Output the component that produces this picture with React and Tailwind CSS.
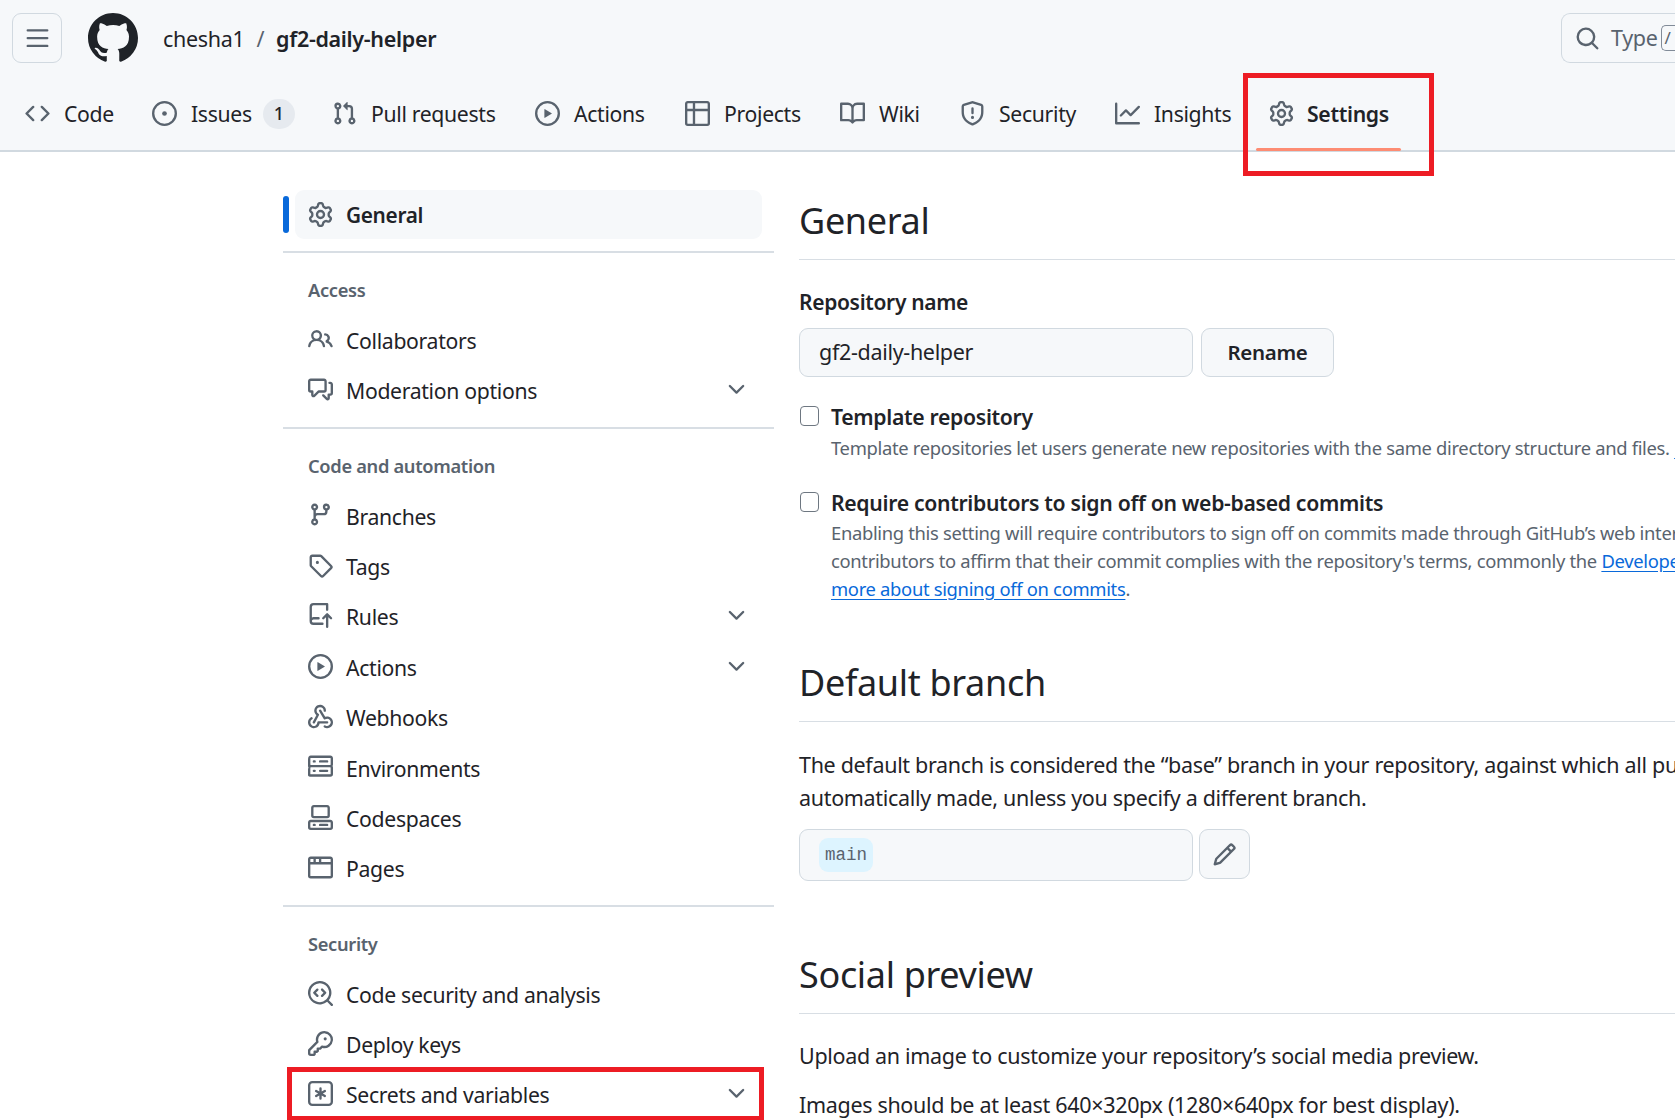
import React from "react";

function Oct({ className, d }) {
  return (
    <svg viewBox="0 0 16 16" fill="currentColor" className={className}>
      {d.map((p) => (
        <path key={p} d={p} />
      ))}
    </svg>
  );
}
const mk = (...d) => (p) => <Oct {...p} d={d} />;

const ThreeBars = mk("M1 2.75A.75.75 0 0 1 1.75 2h12.5a.75.75 0 0 1 0 1.5H1.75A.75.75 0 0 1 1 2.75Zm0 5A.75.75 0 0 1 1.75 7h12.5a.75.75 0 0 1 0 1.5H1.75A.75.75 0 0 1 1 7.75ZM1.75 12h12.5a.75.75 0 0 1 0 1.5H1.75a.75.75 0 0 1 0-1.5Z");
const MarkGithub = mk("M8 0c4.42 0 8 3.58 8 8a8.013 8.013 0 0 1-5.45 7.59c-.4.08-.55-.17-.55-.38 0-.27.01-1.13.01-2.2 0-.75-.25-1.23-.54-1.48 1.78-.2 3.65-.88 3.65-3.95 0-.88-.31-1.59-.82-2.15.08-.2.36-1.02-.08-2.12 0 0-.67-.22-2.2.82-.64-.18-1.32-.27-2-.27-.68 0-1.36.09-2 .27-1.53-1.03-2.2-.82-2.2-.82-.44 1.1-.16 1.92-.08 2.12-.51.56-.82 1.28-.82 2.15 0 3.06 1.86 3.75 3.64 3.95-.23.2-.44.55-.51 1.07-.46.21-1.61.55-2.33-.66-.15-.24-.6-.83-1.23-.82-.67.01-.27.38.01.53.34.19.73.9.82 1.13.16.45.68 1.31 2.69.94 0 .67.01 1.3.01 1.49 0 .21-.15.45-.55.38A7.995 7.995 0 0 1 0 8c0-4.42 3.58-8 8-8Z");
const Webhook = mk(
  "M5.5 4.25a2.25 2.25 0 0 1 4.5 0 .75.75 0 0 0 1.5 0 3.75 3.75 0 1 0-6.14 2.889l-2.272 4.258a.75.75 0 0 0 1.324.706L7 7.25a.75.75 0 0 0-.309-1.015A2.25 2.25 0 0 1 5.5 4.25Z",
  "M7.364 3.607a.75.75 0 0 1 1.03.257l2.608 4.349a3.75 3.75 0 1 1-.628 6.785.75.75 0 0 1 .752-1.299 2.25 2.25 0 1 0-.033-3.88.75.75 0 0 1-1.03-.256L7.107 4.636a.75.75 0 0 1 .257-1.03Z",
  "M2.9 8.776A.75.75 0 0 1 2.625 9.8 2.25 2.25 0 1 0 6 11.75a.75.75 0 0 1 .75-.751h5.5a.75.75 0 0 1 0 1.5H7.425a3.751 3.751 0 1 1-5.55-3.998.75.75 0 0 1 1.024.274Z"
);
const KeyAsterisk = mk(
  "M0 2.75A2.75 2.75 0 0 1 2.75 0h10.5A2.75 2.75 0 0 1 16 2.75v10.5A2.75 2.75 0 0 1 13.25 16H2.75A2.75 2.75 0 0 1 0 13.25ZM2.75 1.5c-.69 0-1.25.56-1.25 1.25v10.5c0 .69.56 1.25 1.25 1.25h10.5c.69 0 1.25-.56 1.25-1.25V2.75c0-.69-.56-1.25-1.25-1.25Z",
  "M8 4a.75.75 0 0 1 .75.75V6.7l1.69-.975a.75.75 0 0 1 .75 1.3L9.5 8l1.69.976a.75.75 0 0 1-.75 1.298L8.75 9.3v1.951a.75.75 0 0 1-1.5 0V9.299l-1.69.976a.75.75 0 0 1-.75-1.3L6.5 8l-1.69-.975a.75.75 0 0 1 .75-1.3l1.69.976V4.75A.75.75 0 0 1 8 4Z"
);
const Search = mk("M10.68 11.74a6 6 0 0 1-7.922-8.982 6 6 0 0 1 8.982 7.922l3.04 3.04a.749.749 0 0 1-.326 1.275.749.749 0 0 1-.734-.215ZM11.5 7a4.499 4.499 0 1 0-8.997 0A4.499 4.499 0 0 0 11.5 7Z");
const Code = mk("m11.28 3.22 4.25 4.25a.75.75 0 0 1 0 1.06l-4.25 4.25a.749.749 0 0 1-1.275-.326.749.749 0 0 1 .215-.734L13.94 8l-3.72-3.72a.749.749 0 0 1 .326-1.275.749.749 0 0 1 .734.215Zm-6.56 0a.751.751 0 0 1 1.042.018.751.751 0 0 1 .018 1.042L2.06 8l3.72 3.72a.749.749 0 0 1-.326 1.275.749.749 0 0 1-.734-.215L.47 8.53a.75.75 0 0 1 0-1.06Z");
const IssueOpened = mk("M8 9.5a1.5 1.5 0 1 0 0-3 1.5 1.5 0 0 0 0 3Z", "M8 0a8 8 0 1 1 0 16A8 8 0 0 1 8 0ZM1.5 8a6.5 6.5 0 1 0 13 0 6.5 6.5 0 0 0-13 0Z");
const PullRequest = mk("M1.5 3.25a2.25 2.25 0 1 1 3 2.122v5.256a2.251 2.251 0 1 1-1.5 0V5.372A2.25 2.25 0 0 1 1.5 3.25Zm5.677-.177L9.573.677A.25.25 0 0 1 10 .854V2.5h1A2.5 2.5 0 0 1 13.5 5v5.628a2.251 2.251 0 1 1-1.5 0V5a1 1 0 0 0-1-1h-1v1.646a.25.25 0 0 1-.427.177L7.177 3.427a.25.25 0 0 1 0-.354ZM3.75 2.5a.75.75 0 1 0 0 1.5.75.75 0 0 0 0-1.5Zm0 9.5a.75.75 0 1 0 0 1.5.75.75 0 0 0 0-1.5Zm8.25.75a.75.75 0 1 0 1.5 0 .75.75 0 0 0-1.5 0Z");
const Play = mk("M8 0a8 8 0 1 1 0 16A8 8 0 0 1 8 0ZM1.5 8a6.5 6.5 0 1 0 13 0 6.5 6.5 0 0 0-13 0Zm4.879-2.773 4.264 2.559a.25.25 0 0 1 0 .428l-4.264 2.559A.25.25 0 0 1 6 10.559V5.442a.25.25 0 0 1 .379-.215Z");
const Table = mk("M0 1.75C0 .784.784 0 1.75 0h12.5C15.216 0 16 .784 16 1.75v12.5A1.75 1.75 0 0 1 14.25 16H1.75A1.75 1.75 0 0 1 0 14.25ZM6.5 6.5v8h7.75a.25.25 0 0 0 .25-.25V6.5Zm8-1.5V1.75a.25.25 0 0 0-.25-.25H6.5V5Zm-13 1.5v7.75c0 .138.112.25.25.25H5v-8ZM5 5V1.5H1.75a.25.25 0 0 0-.25.25V5Z");
const Book = mk("M0 1.75A.75.75 0 0 1 .75 1h4.253c1.227 0 2.317.59 3 1.501A3.743 3.743 0 0 1 11.006 1h4.245a.75.75 0 0 1 .75.75v10.5a.75.75 0 0 1-.75.75h-4.507a2.25 2.25 0 0 0-1.591.659l-.622.621a.75.75 0 0 1-1.06 0l-.622-.621A2.25 2.25 0 0 0 5.258 13H.75a.75.75 0 0 1-.75-.75Zm7.251 10.324.004-5.073-.002-2.253A2.25 2.25 0 0 0 5.003 2.5H1.5v9h3.757a3.75 3.75 0 0 1 1.994.574ZM8.755 4.75l-.004 7.322a3.752 3.752 0 0 1 1.992-.572H14.5v-9h-3.495a2.25 2.25 0 0 0-2.25 2.25Z");
const Shield = mk("M7.467.133a1.748 1.748 0 0 1 1.066 0l5.25 1.68A1.75 1.75 0 0 1 15 3.48V7c0 1.566-.32 3.182-1.303 4.682-.983 1.498-2.585 2.813-5.032 3.855a1.697 1.697 0 0 1-1.33 0c-2.447-1.042-4.049-2.357-5.032-3.855C1.32 10.182 1 8.566 1 7V3.48a1.75 1.75 0 0 1 1.217-1.667Zm.61 1.429a.25.25 0 0 0-.153 0l-5.25 1.68a.25.25 0 0 0-.174.238V7c0 1.358.275 2.666 1.057 3.86.784 1.194 2.121 2.34 4.366 3.297a.196.196 0 0 0 .154 0c2.245-.956 3.582-2.104 4.366-3.298C13.225 9.666 13.5 8.36 13.5 7V3.48a.251.251 0 0 0-.174-.237l-5.25-1.68ZM8.75 4.75v3a.75.75 0 0 1-1.5 0v-3a.75.75 0 0 1 1.5 0ZM9 10.5a1 1 0 1 1-2 0 1 1 0 0 1 2 0Z");
const Graph = mk("M1.5 1.75V13.5h13.75a.75.75 0 0 1 0 1.5H.75a.75.75 0 0 1-.75-.75V1.75a.75.75 0 0 1 1.5 0Zm14.28 2.53-5.25 5.25a.75.75 0 0 1-1.06 0L7 7.06 4.28 9.78a.751.751 0 0 1-1.042-.018.751.751 0 0 1-.018-1.042l3.25-3.25a.75.75 0 0 1 1.06 0L10 7.94l4.72-4.72a.751.751 0 0 1 1.042.018.751.751 0 0 1 .018 1.042Z");
const Gear = mk("M8 0a8.2 8.2 0 0 1 .701.031C9.444.095 9.99.645 10.16 1.29l.288 1.107c.018.066.079.158.212.224.231.114.454.243.668.386.123.082.233.09.299.071l1.103-.303c.644-.176 1.392.021 1.82.63.27.385.506.792.704 1.218.315.675.111 1.422-.364 1.891l-.814.806c-.049.048-.098.147-.088.294.016.257.016.515 0 .772-.01.147.038.246.088.294l.814.806c.475.469.679 1.216.364 1.891a7.977 7.977 0 0 1-.704 1.217c-.428.61-1.176.807-1.82.63l-1.102-.302c-.067-.019-.177-.011-.3.071a5.909 5.909 0 0 1-.668.386c-.133.066-.194.158-.211.224l-.29 1.106c-.168.646-.715 1.196-1.458 1.26a8.006 8.006 0 0 1-1.402 0c-.743-.064-1.289-.614-1.458-1.26l-.289-1.106c-.018-.066-.079-.158-.212-.224a5.738 5.738 0 0 1-.668-.386c-.123-.082-.233-.09-.299-.071l-1.103.303c-.644.176-1.392-.021-1.82-.63a8.12 8.12 0 0 1-.704-1.218c-.315-.675-.111-1.422.363-1.891l.815-.806c.05-.048.098-.147.088-.294a6.214 6.214 0 0 1 0-.772c.01-.147-.038-.246-.088-.294l-.815-.806C.635 6.045.431 5.298.746 4.623a7.92 7.92 0 0 1 .704-1.217c.428-.61 1.176-.807 1.82-.63l1.102.302c.067.019.177.011.3-.071.214-.143.437-.272.668-.386.133-.066.194-.158.211-.224l.29-1.106C6.009.645 6.556.095 7.299.03 7.53.01 7.764 0 8 0Zm-.571 1.525c-.036.003-.108.036-.137.146l-.289 1.105c-.147.561-.549.967-.998 1.189-.173.086-.34.183-.5.29-.417.278-.97.423-1.529.27l-1.103-.303c-.109-.03-.175.016-.195.045-.22.312-.412.644-.573.99-.014.031-.021.11.059.19l.815.806c.411.406.562.957.53 1.456a4.709 4.709 0 0 0 0 .582c.032.499-.119 1.05-.53 1.456l-.815.806c-.081.08-.073.159-.059.19.162.346.353.677.573.989.02.03.085.076.195.046l1.102-.303c.56-.153 1.113-.008 1.53.27.161.107.328.204.501.29.447.222.85.629.997 1.189l.289 1.105c.029.109.101.143.137.146a6.6 6.6 0 0 0 1.142 0c.036-.003.108-.036.137-.146l.289-1.105c.147-.561.549-.967.998-1.189.173-.086.34-.183.5-.29.417-.278.97-.423 1.529-.27l1.103.303c.109.029.175-.016.195-.045.22-.313.411-.644.573-.99.014-.031.021-.11-.059-.19l-.815-.806c-.411-.406-.562-.957-.53-1.456a4.709 4.709 0 0 0 0-.582c-.032-.499.119-1.05.53-1.456l.815-.806c.081-.08.073-.159.059-.19a6.464 6.464 0 0 0-.573-.989c-.02-.03-.085-.076-.195-.046l-1.102.303c-.56.153-1.113.008-1.53-.27a4.44 4.44 0 0 0-.501-.29c-.447-.222-.85-.629-.997-1.189l-.289-1.105c-.029-.11-.101-.143-.137-.146a6.6 6.6 0 0 0-1.142 0ZM11 8a3 3 0 1 1-6 0 3 3 0 0 1 6 0ZM9.5 8a1.5 1.5 0 1 0-3.001.001A1.5 1.5 0 0 0 9.5 8Z");
const People = mk("M2 5.5a3.5 3.5 0 1 1 5.898 2.549 5.508 5.508 0 0 1 3.034 4.084.75.75 0 1 1-1.482.235 4 4 0 0 0-7.9 0 .75.75 0 0 1-1.482-.236A5.507 5.507 0 0 1 3.102 8.05 3.493 3.493 0 0 1 2 5.5ZM11 4a3.001 3.001 0 0 1 2.22 5.018 5.01 5.01 0 0 1 2.56 3.012.749.749 0 0 1-.885.954.752.752 0 0 1-.549-.514 3.507 3.507 0 0 0-2.522-2.372.75.75 0 0 1-.574-.73v-.352a.75.75 0 0 1 .416-.672A1.5 1.5 0 0 0 11 5.5.75.75 0 0 1 11 4Zm-5.5-.5a2 2 0 1 0-.001 3.999A2 2 0 0 0 5.5 3.5Z");
const CommentDiscussion = mk("M1.75 1h8.5c.966 0 1.75.784 1.75 1.75v5.5A1.75 1.75 0 0 1 10.25 10H7.061l-2.574 2.573A1.458 1.458 0 0 1 2 11.543V10h-.25A1.75 1.75 0 0 1 0 8.25v-5.5C0 1.784.784 1 1.75 1ZM1.5 2.75v5.5c0 .138.112.25.25.25h1a.75.75 0 0 1 .75.75v2.19l2.72-2.72a.749.749 0 0 1 .53-.22h3.5a.25.25 0 0 0 .25-.25v-5.5a.25.25 0 0 0-.25-.25h-8.5a.25.25 0 0 0-.25.25Zm13 2a.25.25 0 0 0-.25-.25h-.5a.75.75 0 0 1 0-1.5h.5c.966 0 1.75.784 1.75 1.75v5.5A1.75 1.75 0 0 1 14.25 12H14v1.543a1.458 1.458 0 0 1-2.487 1.03L9.22 12.28a.749.749 0 0 1 .326-1.275.749.749 0 0 1 .734.215l2.22 2.22v-2.19a.75.75 0 0 1 .75-.75h1a.25.25 0 0 0 .25-.25Z");
const ChevronDown = mk("M12.78 5.22a.749.749 0 0 1 0 1.06l-4.25 4.25a.749.749 0 0 1-1.06 0L3.22 6.28a.749.749 0 1 1 1.06-1.06L8 8.939l3.72-3.719a.749.749 0 0 1 1.06 0Z");
const GitBranch = mk("M9.5 3.25a2.25 2.25 0 1 1 3 2.122V6A2.5 2.5 0 0 1 10 8.5H6a1 1 0 0 0-1 1v1.128a2.251 2.251 0 1 1-1.5 0V5.372a2.25 2.25 0 1 1 1.5 0v1.836A2.493 2.493 0 0 1 6 7h4a1 1 0 0 0 1-1v-.628A2.25 2.25 0 0 1 9.5 3.25Zm-6 0a.75.75 0 1 0 1.5 0 .75.75 0 0 0-1.5 0Zm8.25-.75a.75.75 0 1 0 0 1.5.75.75 0 0 0 0-1.5ZM4.25 12a.75.75 0 1 0 0 1.5.75.75 0 0 0 0-1.5Z");
const Tag = mk("M1 7.775V2.75C1 1.784 1.784 1 2.75 1h5.025c.464 0 .91.184 1.238.513l6.25 6.25a1.75 1.75 0 0 1 0 2.474l-5.026 5.026a1.75 1.75 0 0 1-2.474 0l-6.25-6.25A1.752 1.752 0 0 1 1 7.775Zm1.5 0c0 .066.026.13.073.177l6.25 6.25a.25.25 0 0 0 .354 0l5.025-5.025a.25.25 0 0 0 0-.354l-6.25-6.25a.25.25 0 0 0-.177-.073H2.75a.25.25 0 0 0-.25.25ZM6 5a1 1 0 1 1 0 2 1 1 0 0 1 0-2Z");
const RepoPush = mk("M1 2.5A2.5 2.5 0 0 1 3.5 0h8.75a.75.75 0 0 1 .75.75v3.5a.75.75 0 0 1-1.5 0V1.5h-8a1 1 0 0 0-1 1v6.708A2.493 2.493 0 0 1 3.5 9h3.25a.75.75 0 0 1 0 1.5H3.5a1 1 0 0 0 0 2h5.75a.75.75 0 0 1 0 1.5H3.5A2.5 2.5 0 0 1 1 11.5Zm13.23 7.79h-.001l-1.224-1.224v6.184a.75.75 0 0 1-1.5 0V9.066L10.28 10.29a.75.75 0 0 1-1.06-1.061l2.505-2.504a.75.75 0 0 1 1.06 0L15.29 9.23a.751.751 0 0 1-.018 1.042.751.751 0 0 1-1.042.018Z");
const Server = mk("M1.75 1h12.5c.966 0 1.75.784 1.75 1.75v4c0 .372-.116.717-.314 1 .198.283.314.628.314 1v4a1.75 1.75 0 0 1-1.75 1.75H1.75A1.75 1.75 0 0 1 0 13.75v-4c0-.372.116-.717.314-1a1.739 1.739 0 0 1-.314-1v-4C0 1.784.784 1 1.75 1ZM1.5 2.75v4c0 .138.112.25.25.25h12.5a.25.25 0 0 0 .25-.25v-4a.25.25 0 0 0-.25-.25H1.75a.25.25 0 0 0-.25.25Zm.25 5.75a.25.25 0 0 0-.25.25v4c0 .138.112.25.25.25h12.5a.25.25 0 0 0 .25-.25v-4a.25.25 0 0 0-.25-.25ZM7 4.75A.75.75 0 0 1 7.75 4h4.5a.75.75 0 0 1 0 1.5h-4.5A.75.75 0 0 1 7 4.75ZM7.75 10h4.5a.75.75 0 0 1 0 1.5h-4.5a.75.75 0 0 1 0-1.5ZM3 4.75A.75.75 0 0 1 3.75 4h.5a.75.75 0 0 1 0 1.5h-.5A.75.75 0 0 1 3 4.75ZM3.75 10h.5a.75.75 0 0 1 0 1.5h-.5a.75.75 0 0 1 0-1.5Z");
const Codespaces = mk(
  "M0 11.25c0-.966.784-1.75 1.75-1.75h12.5c.966 0 1.75.784 1.75 1.75v3A1.75 1.75 0 0 1 14.25 16H1.75A1.75 1.75 0 0 1 0 14.25Zm2-9.5C2 .784 2.784 0 3.75 0h8.5C13.216 0 14 .784 14 1.75v5a1.75 1.75 0 0 1-1.75 1.75h-8.5A1.75 1.75 0 0 1 2 6.75Zm1.75-.25a.25.25 0 0 0-.25.25v5c0 .138.112.25.25.25h8.5a.25.25 0 0 0 .25-.25v-5a.25.25 0 0 0-.25-.25Zm-2 9.5a.25.25 0 0 0-.25.25v3c0 .138.112.25.25.25h12.5a.25.25 0 0 0 .25-.25v-3a.25.25 0 0 0-.25-.25Z",
  "M7 12.75a.75.75 0 0 1 .75-.75h4.5a.75.75 0 0 1 0 1.5h-4.5a.75.75 0 0 1-.75-.75Zm-4 0a.75.75 0 0 1 .75-.75h.5a.75.75 0 0 1 0 1.5h-.5a.75.75 0 0 1-.75-.75Z"
);
const Browser = mk("M0 2.75C0 1.784.784 1 1.75 1h12.5c.966 0 1.75.784 1.75 1.75v10.5A1.75 1.75 0 0 1 14.25 15H1.75A1.75 1.75 0 0 1 0 13.25ZM14.5 6h-13v7.25c0 .138.112.25.25.25h12.5a.25.25 0 0 0 .25-.25Zm-6-3.5v2h6V2.75a.25.25 0 0 0-.25-.25ZM5 2.5v2h2v-2Zm-3.25 0a.25.25 0 0 0-.25.25V4.5h2v-2Z");
const Codescan = mk(
  "M8.47 4.97a.75.75 0 0 0 0 1.06L9.94 7.5 8.47 8.97a.75.75 0 1 0 1.06 1.06l2-2a.75.75 0 0 0 0-1.06l-2-2a.75.75 0 0 0-1.06 0ZM6.53 6.03a.75.75 0 0 0-1.06-1.06l-2 2a.75.75 0 0 0 0 1.06l2 2a.75.75 0 1 0 1.06-1.06L5.06 7.5l1.47-1.47Z",
  "M12.246 13.307a7.501 7.501 0 1 1 1.06-1.06l2.474 2.473a.749.749 0 0 1-.326 1.275.749.749 0 0 1-.734-.215ZM1.5 7.5a6.002 6.002 0 0 0 3.608 5.504 6.002 6.002 0 0 0 6.486-1.117.748.748 0 0 1 .292-.293A6 6 0 1 0 1.5 7.5Z"
);
const Key = mk("M10.5 0a5.499 5.499 0 1 1-1.288 10.848l-.932.932a.749.749 0 0 1-.53.22H7v.75a.749.749 0 0 1-.22.53l-.5.5a.749.749 0 0 1-.53.22H5v.75a.749.749 0 0 1-.22.53l-.5.5a.749.749 0 0 1-.53.22h-2A1.75 1.75 0 0 1 0 14.25v-2c0-.199.079-.389.22-.53l4.932-4.932A5.5 5.5 0 0 1 10.5 0Zm-4 5.5c-.001.431.069.86.205 1.269a.75.75 0 0 1-.181.768L1.5 12.56v1.69c0 .138.112.25.25.25h1.69l.06-.06v-1.19a.75.75 0 0 1 .75-.75h1.19l.06-.06v-1.19a.75.75 0 0 1 .75-.75h1.19l1.023-1.025a.75.75 0 0 1 .768-.18A4 4 0 1 0 6.5 5.5ZM11 6a1 1 0 1 1 0-2 1 1 0 0 1 0 2Z");
const Pencil = mk("M11.013 1.427a1.75 1.75 0 0 1 2.474 0l1.086 1.086a1.75 1.75 0 0 1 0 2.474l-8.61 8.61c-.21.21-.47.364-.756.445l-3.251.93a.75.75 0 0 1-.927-.928l.929-3.25c.081-.286.235-.547.445-.758l8.61-8.61Zm.176 4.823L9.75 4.81l-6.286 6.287a.253.253 0 0 0-.064.108l-.558 1.953 1.953-.558a.253.253 0 0 0 .108-.064Zm1.238-3.763a.25.25 0 0 0-.354 0L10.811 3.75l1.439 1.44 1.263-1.263a.25.25 0 0 0 0-.354Z");

const tabs = [
  { t: "Code", I: Code, w: "w-[127px]" },
  { t: "Issues", I: IssueOpened, w: "w-[180px]", badge: "1" },
  { t: "Pull requests", I: PullRequest, w: "w-[203px]" },
  { t: "Actions", I: Play, w: "w-[150px]" },
  { t: "Projects", I: Table, w: "w-[155px]" },
  { t: "Wiki", I: Book, w: "w-[120px]" },
  { t: "Security", I: Shield, w: "w-[155px]" },
  { t: "Insights", I: Graph, w: "w-[154px]" },
];

function Row({ I, t, chev }) {
  return (
    <div className="ml-[12px] mr-[12px] h-[50.4px] flex items-center pl-[13px] pr-[13px] gap-[13px] text-[21.2px] text-[#1f2328]">
      <I className="w-[25px] h-[25px] text-[#59636e] shrink-0" />
      <span className="flex-1 pt-[3px]">{t}</span>
      {chev && <ChevronDown className="w-[25px] h-[25px] text-[#59636e]" />}
    </div>
  );
}

function Section({ label, children }) {
  return (
    <div className="border-t-2 border-[#d8dee4] mt-[12px] pt-[25px]">
      <div className="ml-[25px] h-[24px] leading-[24px] text-[18.3px] font-semibold text-[#59636e] mb-[12px]">{label}</div>
      {children}
    </div>
  );
}

function Heading({ children, className = "" }) {
  return (
    <div className={"h-[50px] leading-[50px] text-[36px] text-[#1f2328] box-content pb-[13px] border-b-[1.5px] border-[#d8dee4] " + className}>
      {children}
    </div>
  );
}

function Check() {
  return <div className="ml-[1px] -mt-[3px] w-[19px] h-[20px] border-[1.5px] border-[#6e7781] rounded-[4px] bg-white shrink-0" />;
}

export default function App() {
  return (
    <div className="relative w-[1675px] h-[1120px] overflow-hidden bg-white font-['Noto_Sans',sans-serif] text-[21.5px] tracking-[-0.015em] text-[#1f2328]">
      <header className="h-[152px] bg-[#f6f8fa] border-b-2 border-[#d1d9e0] relative">
        <div className="h-[79px] flex items-start pt-[13px] pl-[12px]">
          <button className="w-[50px] h-[50px] rounded-[9px] border-[1.5px] border-[#d1d9e0] flex items-center justify-center">
            <ThreeBars className="w-[25px] h-[25px] text-[#59636e]" />
          </button>
          <MarkGithub className="w-[50px] h-[50px] ml-[26px] text-[#1f2328]" />
          <div className="ml-[25px] h-[50px] pt-[2px] flex items-center">
            <span>chesha1</span>
            <span className="ml-[12px] text-[#59636e]">/</span>
            <span className="ml-[12px] font-semibold">gf2-daily-helper</span>
          </div>
          <div className="ml-auto w-[114px] shrink-0 h-[50px] rounded-l-[9px] border-[1.5px] border-r-0 border-[#d1d9e0] flex items-center pl-[13px] text-[#59636e]">
            <Search className="w-[25px] h-[25px] shrink-0" />
            <span className="ml-[11px] pt-[1px]">Type</span>
            <span className="ml-[3px] w-[30px] h-[26px] border-[1.5px] border-r-0 border-[#818b98] rounded-l-[5px] text-[17px] leading-[23px] pl-[3px] shrink-0">/</span>
          </div>
        </div>
        <nav className="h-[70px] flex items-center pl-[25px]">
          {tabs.map(({ t, I, w, badge }) => (
            <div key={t} className={"flex items-center gap-[14px] shrink-0 text-[21.2px] " + w}>
              <I className="w-[25px] h-[25px] text-[#59636e] shrink-0" />
              <span>{t}</span>
              {badge && (
                <span className="-ml-[3px] w-[32px] h-[30px] rounded-full bg-[#e6eaef] flex items-center justify-center text-[18px] font-medium">{badge}</span>
              )}
            </div>
          ))}
          <div className="flex items-center gap-[13px] shrink-0 text-[21.2px]">
            <Gear className="w-[25px] h-[25px] text-[#59636e] shrink-0" />
            <span className="font-semibold">Settings</span>
          </div>
        </nav>
        <div className="absolute left-[1256px] top-[148px] w-[145px] h-[3px] rounded-full bg-[#fd8c73]" />
      </header>

      <div className="flex pl-[283px]">
        <aside className="w-[491px] shrink-0 pt-[38px]">
          <div className="relative ml-[12px] mr-[12px] h-[49px] rounded-[9px] bg-[#f6f8fa] flex items-center pl-[13px] gap-[13px] text-[20.8px] font-semibold">
            <div className="absolute -left-[12px] top-[6px] w-[6px] h-[37px] rounded-[3px] bg-[#0969da]" />
            <Gear className="w-[25px] h-[25px] text-[#59636e]" />
            <span className="pt-[2px]">General</span>
          </div>
          <div className="mt-[2px]" />
          <Section label="Access">
            <Row I={People} t="Collaborators" />
            <Row I={CommentDiscussion} t="Moderation options" chev />
          </Section>
          <Section label="Code and automation">
            <Row I={GitBranch} t="Branches" />
            <Row I={Tag} t="Tags" />
            <Row I={RepoPush} t="Rules" chev />
            <Row I={Play} t="Actions" chev />
            <Row I={Webhook} t="Webhooks" />
            <Row I={Server} t="Environments" />
            <Row I={Codespaces} t="Codespaces" />
            <Row I={Browser} t="Pages" />
          </Section>
          <Section label="Security">
            <Row I={Codescan} t="Code security and analysis" />
            <Row I={Key} t="Deploy keys" />
            <Row I={KeyAsterisk} t="Secrets and variables" chev />
          </Section>
        </aside>

        <main className="ml-[25px] flex-1 min-w-0 pt-[44px] whitespace-nowrap">
          <Heading>General</Heading>
          <div className="mt-[27px] h-[30px] leading-[30px] font-semibold text-[21px]">Repository name</div>
          <div className="mt-[11px] flex gap-[8px]">
            <div className="w-[394px] h-[49px] rounded-[9px] border-[1.5px] border-[#d1d9e0] bg-[#f6f8fa] flex items-center pl-[19px]">gf2-daily-helper</div>
            <button className="w-[133px] h-[49px] rounded-[9px] border-[1.5px] border-[#d1d9e0] bg-[#f6f8fa] font-semibold text-[20.5px]">Rename</button>
          </div>
          <div className="mt-[25px] h-[30px] flex items-center gap-[12px] font-semibold text-[21.2px]">
            <Check />
            <span>Template repository</span>
          </div>
          <div className="mt-[2px] pl-[32px] text-[18.4px] leading-[28px] text-[#59636e]">
            Template repositories let users generate new repositories with the same directory structure and files. <a className="text-[#0969da] underline underline-offset-[3px]">Learn more about template repositories</a>.
          </div>
          <div className="mt-[26px] h-[30px] flex items-center gap-[12px] font-semibold text-[21.2px]">
            <Check />
            <span>Require contributors to sign off on web-based commits</span>
          </div>
          <div className="mt-[1px] pl-[32px] text-[18.4px] leading-[28px] text-[#59636e]">
            <div>Enabling this setting will require contributors to sign off on commits made through GitHub’s web interface. Signing off is a way for</div>
            <div>contributors to affirm that their commit complies with the repository's terms, commonly the <a className="text-[#0969da] underline underline-offset-[3px]">Developer Certificate of Origin</a>. Learn</div>
            <div><a className="text-[#0969da] underline underline-offset-[3px]">more about signing off on commits</a>.</div>
          </div>

          <Heading className="mt-[55px]">Default branch</Heading>
          <div className="mt-[26px] leading-[33px]">
            <div>The default branch is considered the “base” branch in your repository, against which all pull requests and code commits are</div>
            <div>automatically made, unless you specify a different branch.</div>
          </div>
          <div className="mt-[15px] flex gap-[6px] items-start">
            <div className="w-[394px] h-[52px] rounded-[9px] border-[1.5px] border-[#d1d9e0] bg-[#f6f8fa] flex items-center pl-[19px]">
              <span className="w-[54px] h-[34px] pt-[1px] rounded-[9px] bg-[#ddf4ff] text-[#59636e] font-['Liberation_Mono',monospace] text-[17.5px] tracking-normal flex items-center justify-center">main</span>
            </div>
            <button className="w-[51px] h-[50px] rounded-[9px] border-[1.5px] border-[#d1d9e0] bg-[#f6f8fa] flex items-center justify-center">
              <Pencil className="w-[25px] h-[25px] text-[#59636e]" />
            </button>
          </div>

          <Heading className="mt-[69px]">Social preview</Heading>
          <div className="mt-[25px] leading-[33px]">Upload an image to customize your repository’s social media preview.</div>
          <div className="mt-[16px] leading-[33px]">Images should be at least 640×320px (1280×640px for best display).</div>
        </main>
      </div>

      <div className="absolute left-[1243px] top-[73px] w-[191px] h-[103px] border-[5px] border-[#ed1c24]" />
      <div className="absolute left-[287px] top-[1067px] w-[477px] h-[53px] border-[5px] border-b-[4px] border-[#ed1c24]" />
    </div>
  );
}
